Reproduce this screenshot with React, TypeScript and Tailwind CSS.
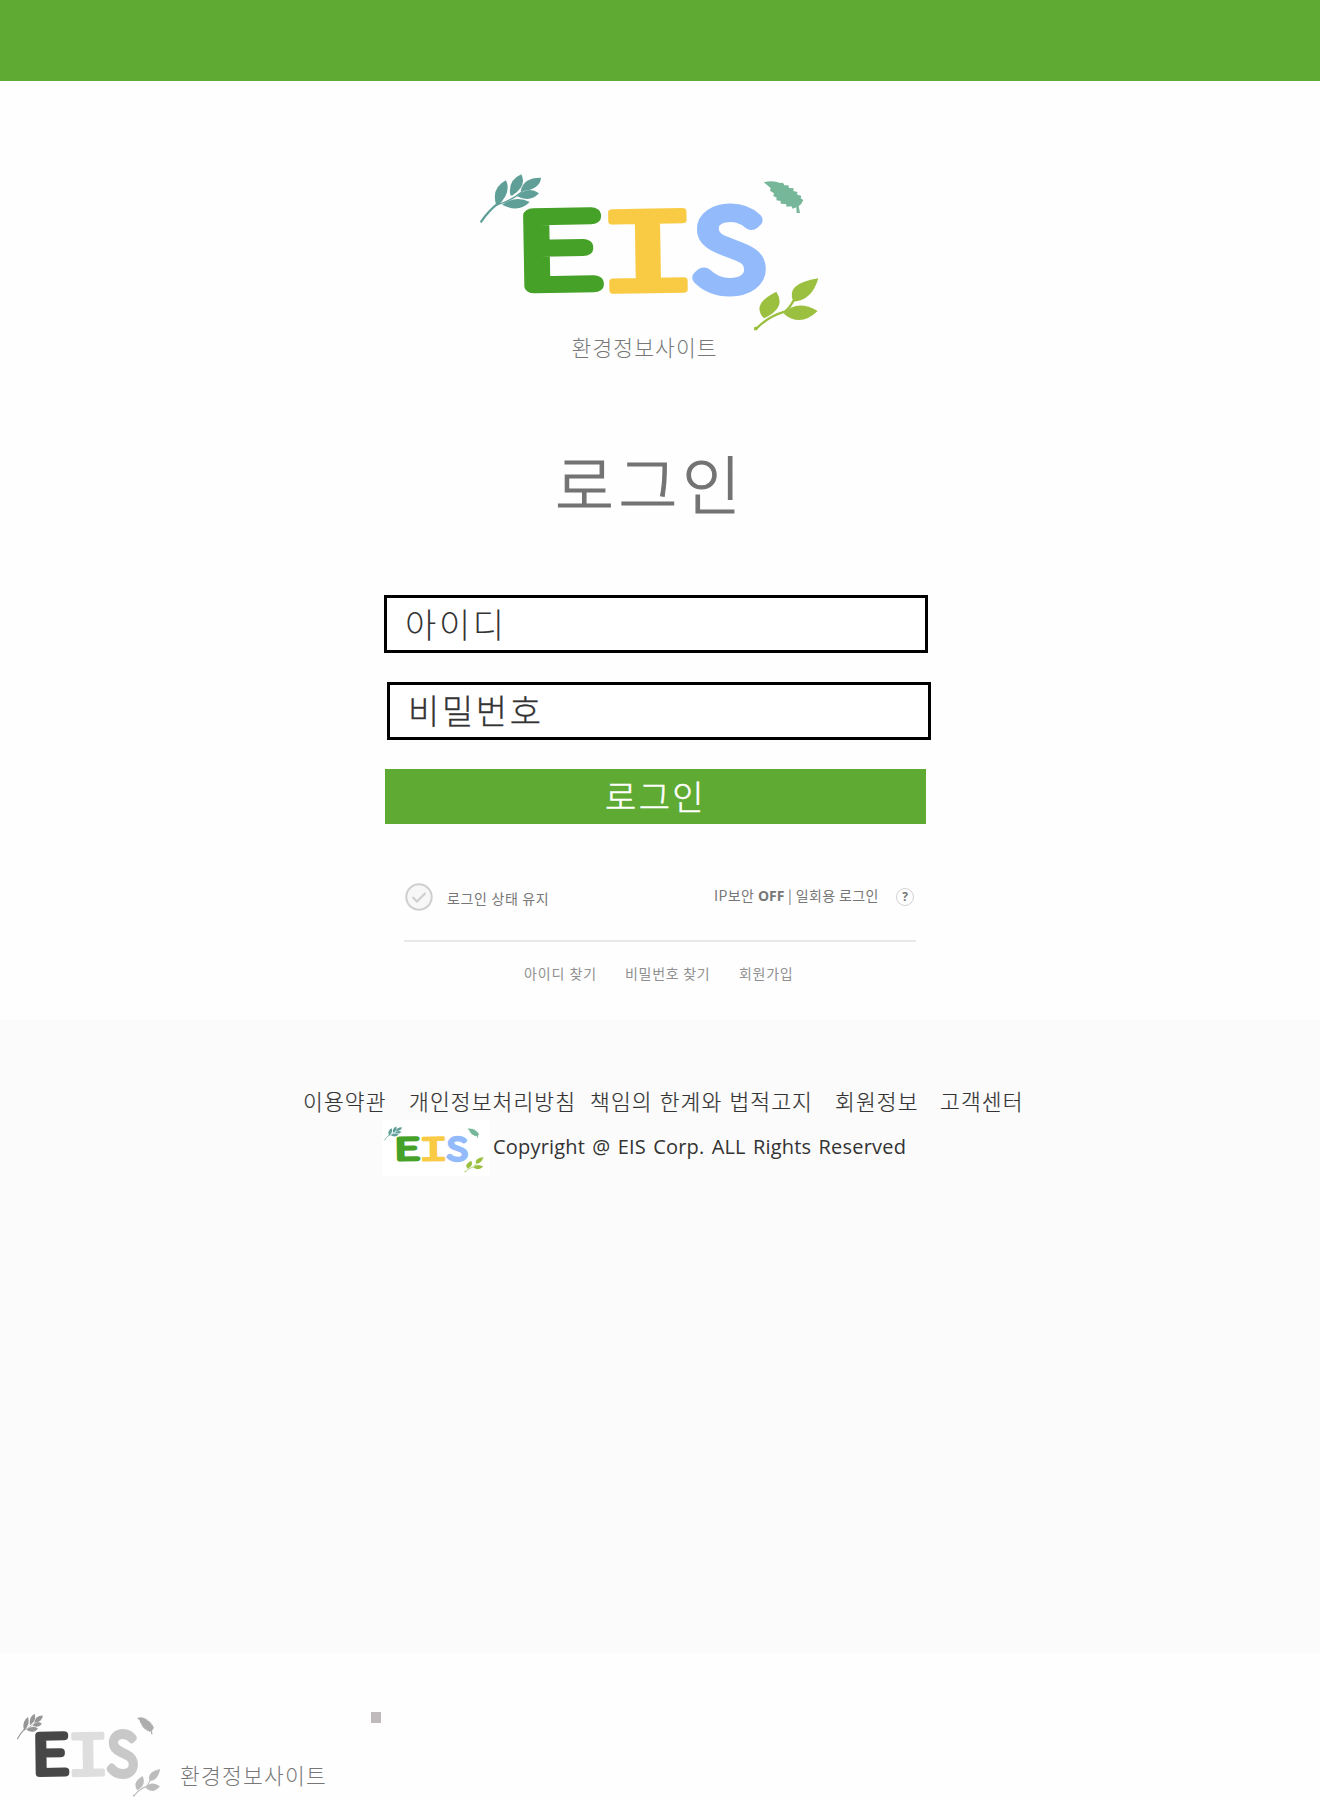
import React from "react";

type Palette = { e: string; i: string; s: string; sprig: string; leaf: string; twig: string };

const color: Palette = { e: "#45a127", i: "#f9cb45", s: "#93bbfb", sprig: "#5f9f98", leaf: "#76b799", twig: "#9bc03f" };
const mono: Palette = { e: "#474747", i: "#dedede", s: "#c8c8c8", sprig: "#969696", leaf: "#adadad", twig: "#bcbcbc" };

function Logo({ p, className }: { p: Palette; className: string }) {
  return (
    <svg viewBox="60 100 1020 480" preserveAspectRatio="none" overflow="visible" className={className}>
      <g fill={p.sprig}>
        <path d="M62 248 Q85 213 118 188" fill="none" stroke={p.sprig} strokeWidth="7" />
        <path d="M112 195 Q180 175 212 125" fill="none" stroke={p.sprig} strokeWidth="4" />
        <path d="M109 198 Q92 145 138 122 Q155 158 115 197Z" />
        <path d="M151 166 Q143 122 184 104 Q202 139 156 168Z" />
        <path d="M182 154 Q190 113 243 114 Q240 151 182 154Z" />
        <path d="M171 170 Q204 137 237 161 Q211 189 171 170Z" />
        <path d="M126 195 Q169 165 209 187 Q176 221 126 195Z" />
      </g>
      <path
        fill={p.leaf}
        d="M911 128 Q940 120 960 130 L969 129 L973 137 L985 137 L987 145 L1001 146 L1000 154 L1013 157 L1010 164 L1024 169 L1022 176 L1030 181 L1024 192 L1016 200 L1020 220 L1010 220 L1009 203 L998 207 L994 200 L980 201 L978 193 L962 192 L962 184 L949 182 L950 174 L940 169 L942 161 L930 153 L932 145Z"
      />
      <g fill={p.twig}>
        <path d="M887 569 Q923 531 974 516 Q990 505 1001 482" fill="none" stroke={p.twig} strokeWidth="7" />
        <path d="M882 563 L895 560 L891 572 L882 572Z" />
        <path d="M912 536 Q872 494 949 456 Q980 505 912 536Z" />
        <path d="M1000 486 Q975 432 1075 416 Q1056 483 1000 486Z" />
        <path d="M971 522 Q1010 478 1073 514 Q1021 564 971 522Z" />
      </g>
      <g strokeLinejoin="round" strokeLinecap="round" textAnchor="middle" fontFamily="Noto Sans CJK KR" fontWeight="100">
        <text transform="translate(299 439) rotate(-1) scale(1.54 1.03)" fontSize="286" strokeWidth="40" fill={p.e} stroke={p.e}>E</text>
        <text transform="translate(566 451) rotate(-1) scale(1.52 1.05)" fontFamily="Liberation Mono" fontWeight="400" fontSize="340" strokeWidth="18" fill={p.i} stroke={p.i}>I</text>
        <text transform="translate(806 445) scale(1.26 1.09)" fontSize="286" strokeWidth="41" fill={p.s} stroke={p.s}>S</text>
      </g>
    </svg>
  );
}

const terms = [
  { label: "이용약관", cls: "w-[106px]" },
  { label: "개인정보처리방침", cls: "w-[181px]" },
  { label: "책임의 한계와 법적고지", cls: "w-[245px]" },
  { label: "회원정보", cls: "w-[105px]" },
  { label: "고객센터", cls: "w-[100px]" },
];

export default function App() {
  return (
    <div className="flex h-[1800px] w-[1320px] flex-col overflow-hidden bg-[#fefefe] font-['Noto_Sans_CJK_KR',sans-serif] font-light whitespace-nowrap">
      <header className="h-[81px] shrink-0 bg-[#5faa32]" />
      <main className="flex h-[939px] shrink-0 flex-col items-start">
        <Logo p={color} className="mt-[92px] ml-[480px] h-[160px] w-[340px]" />
        <p className="-mt-px ml-[571.5px] h-[30px] text-[21.5px] leading-[30px] tracking-[1.1px] text-[#777]">환경정보사이트</p>
        <h1 className="mt-[74px] ml-[555px] h-[90px] text-[64px] leading-[90px] tracking-[4.6px] text-[#737373] [-webkit-text-stroke:1.2px_#737373]">로그인</h1>
        <form className="mt-[69px] flex flex-col items-start text-[34px] tracking-[2.6px]">
          <div className="ml-[384px] flex h-[58px] w-[544px] items-center border-[3px] border-black bg-white pb-[2px] pl-[18px] text-[#333]">아이디</div>
          <div className="mt-[29px] ml-[387px] flex h-[58px] w-[544px] items-center border-[3px] border-black bg-white pb-[4px] pl-[18px] text-[#333] [-webkit-text-stroke:0.3px_#333]">비밀번호</div>
          <button type="button" className="mt-[29px] ml-[385px] flex h-[55px] w-[541px] items-center bg-[#5faa32] pb-[2px] pl-[220px] tracking-[2.4px] text-white [-webkit-text-stroke:0.5px_white]">로그인</button>
        </form>
        <div className="mt-[54px] ml-[405px] flex h-[38px] w-[512px] items-center text-[14px] font-normal text-[#777]">
          <svg viewBox="0 0 28 28" className="size-7 shrink-0" fill="none" stroke="#cfcfcf">
            <circle cx="14" cy="14" r="12.7" strokeWidth="2" fill="#f7f7f7" />
            <path d="M7.5 14 L12 18.5 L20.5 10" strokeWidth="2.2" />
          </svg>
          <span className="ml-[14px] w-[267px] pt-[2px] tracking-[0.65px]">로그인 상태 유지</span>
          <span className="w-[182px] pb-[3px] tracking-[0.4px]">IP보안 <b className="font-['Open_Sans'] font-bold tracking-normal">OFF</b> | 일회용 로그인</span>
          <span className="flex size-[18px] shrink-0 items-center justify-center rounded-full border border-[#d2d2d2] font-['Open_Sans'] text-[12px] font-bold">?</span>
        </div>
        <div className="mt-[24px] ml-[404px] h-[2px] w-[512px] bg-[#e8e8e8]" />
        <nav className="mt-[20px] ml-[524px] flex h-[22px] text-[14px] leading-[22px] font-normal tracking-[0.7px] text-[#909090]">
          <span className="w-[101px] tracking-[0.9px]">아이디 찾기</span>
          <span className="w-[114px]">비밀번호 찾기</span>
          <span>회원가입</span>
        </nav>
      </main>
      <footer className="flex h-[633px] shrink-0 flex-col bg-[#fbfbfb] text-[#333]">
        <nav className="mt-[65px] ml-[303px] flex h-[32px] text-[21.5px] leading-[32px] tracking-[1.1px] [word-spacing:1.2px] [-webkit-text-stroke:0.2px_#333]">
          {terms.map((t) => (
            <span key={t.label} className={t.cls}>{t.label}</span>
          ))}
        </nav>
        <div className="mt-[3px] ml-[382px] flex h-[56px] items-center">
          <div className="flex h-[56px] w-[108px] items-center bg-white pt-[2px] pl-[2px]">
            <Logo p={color} className="h-[47px] w-[100px]" />
          </div>
          <span className="ml-[3px] pb-[3px] font-['Open_Sans'] text-[20px] font-normal tracking-[0.2px] [word-spacing:1.8px]">Copyright @ EIS Corp. ALL Rights Reserved</span>
        </div>
      </footer>
      <section className="flex h-[147px] shrink-0 items-start">
        <Logo p={mono} className="mt-[60px] ml-[17px] h-[85px] w-[144px]" />
        <span className="mt-[107px] ml-[19px] w-[191px] text-[21.5px] leading-[30px] tracking-[1.2px] text-[#777]">환경정보사이트</span>
        <i className="mt-[59px] h-[11px] w-[10px] bg-[#c1babd]" />
      </section>
    </div>
  );
}
